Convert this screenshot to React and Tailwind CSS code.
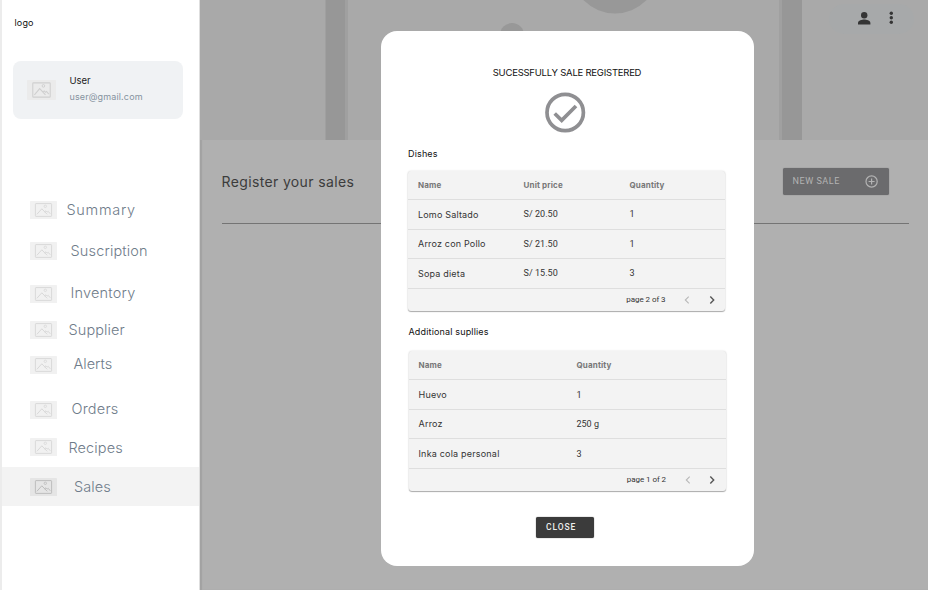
import React from "react";

const NAV = [
  { label: "Summary", row: "mt-[82px] h-[18px]", text: "pb-[1px] pl-[9.5px] tracking-[0.7px]" },
  { label: "Suscription", row: "mt-[23px] h-[18px]", text: "pb-[1px] pl-[13.5px] tracking-[0.15px]" },
  { label: "Inventory", row: "mt-[25px] h-[18px]", text: "pb-[2px] pl-[13.5px] tracking-[0.2px]" },
  { label: "Supplier", row: "mt-[18px] h-[18px]", text: "pb-[1px] pl-[11.5px] tracking-[0.1px]" },
  { label: "Alerts", row: "mt-[17px] h-[18px]", text: "pb-[2px] pl-[16.5px] tracking-[0px]" },
  { label: "Orders", row: "mt-[27px] h-[18px]", text: "pb-[2px] pl-[14.5px] tracking-[0.2px]" },
  { label: "Recipes", row: "mt-[19px] h-[18px]", text: "pl-[11.5px] pt-[1px] tracking-[0.1px]" },
  { label: "Sales", row: "mt-[11px] h-[39px] bg-[#f3f3f3]", text: "pl-[17px] tracking-[0.1px]", active: true },
];

function Placeholder({ className, fill, stroke }) {
  return (
    <svg viewBox="0 0 27 18" className={className} fill="none" stroke={stroke} preserveAspectRatio="none">
      <rect width="27" height="18" rx="0.6" fill={fill} stroke="none" />
      <rect x="5.4" y="2.6" width="16.2" height="12.8" rx="0.6" strokeWidth="1" />
      <circle cx="15.3" cy="5.3" r="1.2" strokeWidth="0.9" />
      <path d="M6.9 13.3 11.8 7.8 17.2 13.3M14.6 10.9 16 9.8 17.3 11.1 18.2 10.3 20.3 12.8" strokeWidth="1" />
    </svg>
  );
}

function DataTable({ columns, grid, headers, rows, page }) {
  return (
    <div className="h-[140.5px] w-[317px] rounded-[3px] bg-[#f3f3f3] text-[9px] text-[#333] shadow-[0_1px_1px_rgba(0,0,0,0.3),0_0_2px_rgba(0,0,0,0.16)]">
      <div className={`grid h-[28.5px] items-center pl-[10px] pt-[1px] text-[8px] font-bold text-[#777] ${grid}`}>
        {headers.map((h) => (
          <span key={h} className="tracking-[0.15px]">{h}</span>
        ))}
      </div>
      {rows.map((r) => (
        <div key={r[0]} className={`grid h-[29.5px] items-center border-t border-[#dedede] pl-[10px] ${grid}`}>
          {r.map((c, i) => (
            <span key={i} className={columns[i]}>{c}</span>
          ))}
        </div>
      ))}
      <div className="flex h-[23.5px] items-center justify-end border-t border-[#dedede] pr-[7.5px]">
        <span className="pt-[1px] font-[Roboto] text-[8px] tracking-[-0.06px]">{page}</span>
        <svg className="ml-[15.5px] h-[12px] w-[12px]" viewBox="0 0 12 12" fill="none" stroke="#b8b8b8" strokeWidth="1.1">
          <path d="M7.7 2.6 4.3 6l3.4 3.4" />
        </svg>
        <svg className="ml-[12.5px] h-[12px] w-[12px]" viewBox="0 0 12 12" fill="none" stroke="#555" strokeWidth="1.4">
          <path d="M4.3 2.6 7.7 6 4.3 9.4" />
        </svg>
      </div>
    </div>
  );
}

function Sidebar() {
  return (
    <aside className="flex h-full w-[200px] shrink-0 flex-col border-l-2 border-r border-l-[#ececec] border-r-[#dedede] bg-white">
      <div className="mt-[17px] h-[12px] pl-[12.5px] text-[9px] leading-[12px] tracking-[0.15px] text-[#111]">logo</div>
      <div className="ml-[11px] mt-[32px] flex h-[58px] w-[170px] items-center rounded-[8px] bg-[#f0f2f4] pl-[14px]">
        <div className="flex h-[38px] w-[29px] items-center rounded-full">
          <Placeholder className="h-[20px] w-[29px]" fill="#ebebeb" stroke="#cfcfcf" />
        </div>
        <div className="pb-[2px] pl-[13.5px]">
          <div className="text-[9.5px] leading-[16px] text-[#1c1c1c]">User</div>
          <div className="text-[9px] leading-[16px] tracking-[0.14px] text-[#86939f]">user@gmail.com</div>
        </div>
      </div>
      <nav className="flex flex-col">
        {NAV.map((n) => (
          <div key={n.label} className={`flex items-center pl-[28px] ${n.row}`}>
            <Placeholder
              className="h-[18px] w-[27px] shrink-0"
              fill={n.active ? "#e5e5e5" : "#f1f1f1"}
              stroke={n.active ? "#bdbdbd" : "#d9d9d9"}
            />
            <span className={`text-[14.5px] font-light leading-[18px] text-[#6f7c8a] ${n.text}`}>{n.label}</span>
          </div>
        ))}
      </nav>
    </aside>
  );
}

function Banner() {
  return (
    <div className="flex h-[140px] overflow-hidden bg-[#a9a9a9]">
      <svg width="728" height="140" viewBox="200 0 728 140">
        <rect x="325" width="23" height="140" fill="#a0a0a0" />
        <rect x="326" width="19" height="140" fill="#979797" />
        <rect x="779" width="23" height="140" fill="#a0a0a0" />
        <rect x="782" width="20" height="140" fill="#979797" />
        <circle cx="615" cy="-30" r="43.5" fill="#989898" />
        <circle cx="512" cy="35" r="12" fill="#989898" />
        <rect x="829" y="4" width="85" height="30" rx="15" fill="#a7a9aa" />
        <g fill="#353535">
          <circle cx="864.2" cy="15.2" r="3.2" />
          <path d="M858 24.4v-1.5c0-2.2 4.2-3.3 6.2-3.3s6.2 1.1 6.2 3.3v1.5z" />
          <circle cx="891.3" cy="13.3" r="1.7" />
          <circle cx="891.3" cy="17.8" r="1.7" />
          <circle cx="891.3" cy="22.3" r="1.7" />
        </g>
      </svg>
    </div>
  );
}

export default function App() {
  return (
    <div className="relative flex h-[590px] w-[928px] overflow-hidden bg-[#b0b0b0] font-[Inter,sans-serif]">
      <Sidebar />
      <main className="flex flex-1 flex-col shadow-[inset_2px_0_1px_rgba(0,0,0,0.08)]">
        <Banner />
        <div className="ml-[21.5px] mr-[19px] flex h-[84px] items-center justify-between border-b border-[#747474] pr-[20.5px]">
          <h1 className="text-[14px] tracking-[0.36px] text-[#3c3c3c]">Register your sales</h1>
          <button className="flex h-[27px] w-[106px] items-center justify-between rounded-[2px] bg-[#6b6b6d] pl-[10px] pr-[10px] pt-px font-[Roboto] text-[9px] tracking-[0.55px] text-[#b3b3b3] shadow-[0_0_1px_#666]">
            NEW SALE
            <svg className="h-[14px] w-[14px]" viewBox="0 0 14 14" fill="none" stroke="#b3b3b3" strokeWidth="1.2">
              <circle cx="6.6" cy="6.5" r="5.6" />
              <path d="M6.6 3.5v6M3.6 6.5h6" />
            </svg>
          </button>
        </div>
      </main>

      <section className="absolute left-[380.5px] top-[30.5px] flex h-[535.5px] w-[373.5px] flex-col items-start rounded-[16px] bg-white pl-[27.5px]">
        <h2 className="mt-[35.5px] w-[318px] text-center text-[9.5px] leading-[13px] tracking-[-0.23px] text-[#111]">SUCESSFULLY SALE REGISTERED</h2>
        <svg className="ml-[137px] mt-[13px] h-[41px] w-[41px]" viewBox="0 0 41 41" fill="none" stroke="#8f8f92">
          <circle cx="20.2" cy="20.5" r="18.2" strokeWidth="3.7" />
          <path d="M9.7 21.5 16.7 28.3 31 14" strokeWidth="3.7" />
        </svg>
        <h3 className="mt-[14px] text-[9px] leading-[14px] tracking-[0.15px] text-[#111]">Dishes</h3>
        <div className="mt-[9.5px]">
          <DataTable
            grid="grid-cols-[105.5px_106px_1fr]"
            headers={["Name", "Unit price", "Quantity"]}
            columns={["tracking-[0.18px]", "pt-[1px] font-[Roboto] tracking-[0.05px]", "pt-[1px] font-[Roboto]"]}
            rows={[
              ["Lomo Saltado", "S/ 20.50", "1"],
              ["Arroz con Pollo", "S/ 21.50", "1"],
              ["Sopa dieta", "S/ 15.50", "3"],
            ]}
            page="page 2 of 3"
          />
        </div>
        <h3 className="mt-[14px] pl-[0.5px] text-[9px] leading-[14px] tracking-[0.16px] text-[#111]">Additional supllies</h3>
        <div className="mt-[11.5px] pl-[0.5px]">
          <DataTable
            grid="grid-cols-[158px_1fr]"
            headers={["Name", "Quantity"]}
            columns={["tracking-[0.2px]", "pt-[2px] font-[Roboto]"]}
            rows={[
              ["Huevo", "1"],
              ["Arroz", "250 g"],
              ["Inka cola personal", "3"],
            ]}
            page="page 1 of 2"
          />
        </div>
        <button className="ml-[128px] mt-[25.5px] flex h-[21px] w-[58px] items-center rounded-[2px] bg-[#3b3b3b] pl-[10px] font-[Roboto] text-[8.5px] font-medium tracking-[0.9px] text-[#eee] shadow-[0_0_1px_#333]">
          CLOSE
        </button>
      </section>
    </div>
  );
}
